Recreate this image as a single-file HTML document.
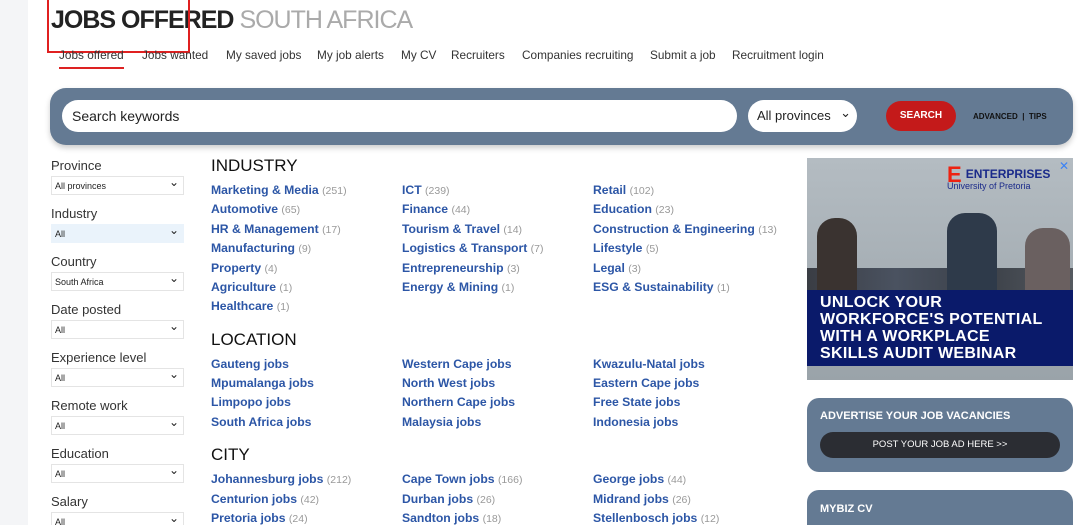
<!DOCTYPE html><html><head><style>
html,body{margin:0;width:1080px;height:525px;overflow:hidden}
body{background:#fff;font-family:"Liberation Sans",sans-serif;position:relative}
.a{position:absolute;white-space:nowrap}
.strip{left:0;top:0;width:28px;height:525px;background:#f4f5f7}
.nav{top:48px;font-size:11.8px;color:#333}
.lbl{font-size:13px;color:#333;left:51px}
.sel{left:51px;width:133px;height:19px;border:1px solid #e4e4e4;font-size:9px;color:#222;box-sizing:border-box;padding:4px 3px}
.sel:after{content:"⌄";position:absolute;right:4px;top:-2px;font-size:12px}
.h{font-size:17px;color:#111;left:211px}
.l{font-size:12.2px;font-weight:bold;color:#2c56a6}
.l span{font-weight:normal;color:#999;font-size:10.5px}
</style></head><body>
<div class="a strip"></div>
<div class="a" style="left:51px;top:6px;font-size:25px;letter-spacing:-1px"><b style="color:#222">JOBS OFFERED</b> <span style="color:#aaa">SOUTH AFRICA</span></div>
<div class="a" style="left:47px;top:0;width:139px;height:51px;border:2px solid #e02020;border-top:none"></div>
<div class="a nav" style="left:59px">Jobs offered</div>
<div class="a" style="left:59px;top:67px;width:65px;height:2px;background:#d22"></div>
<div class="a nav" style="left:142px">Jobs wanted</div>
<div class="a nav" style="left:226px">My saved jobs</div>
<div class="a nav" style="left:317px">My job alerts</div>
<div class="a nav" style="left:401px">My CV</div>
<div class="a nav" style="left:451px">Recruiters</div>
<div class="a nav" style="left:522px">Companies recruiting</div>
<div class="a nav" style="left:650px">Submit a job</div>
<div class="a nav" style="left:732px">Recruitment login</div>
<div class="a" style="left:50px;top:88px;width:1023px;height:57px;background:#647a93;border-radius:16px;box-shadow:0 3px 6px rgba(0,0,0,.2)"></div>
<div class="a" style="left:62px;top:100px;width:675px;height:32px;background:#fff;border-radius:16px;font-size:14px;color:#222;line-height:32px;padding-left:10px;box-sizing:border-box">Search keywords</div>
<div class="a" style="left:748px;top:100px;width:109px;height:32px;background:#fff;border-radius:16px;font-size:13px;color:#222;line-height:32px;padding-left:9px;box-sizing:border-box">All provinces<span style="position:absolute;right:6px;top:-3px;font-size:13px">⌄</span></div>
<div class="a" style="left:886px;top:101px;width:70px;height:30px;background:#c41a1a;border-radius:15px;color:#fff;font-size:10px;font-weight:bold;text-align:center;line-height:30px">SEARCH</div>
<div class="a" style="left:973px;top:112px;font-size:8px;font-weight:bold;color:#111">ADVANCED &nbsp;| &nbsp;TIPS</div>

<div class="a lbl" style="top:158px">Province</div><div class="a sel" style="top:176px">All provinces</div>
<div class="a lbl" style="top:206px">Industry</div><div class="a sel" style="top:224px;background:#eaf3fb;border-color:#eaf3fb">All</div>
<div class="a lbl" style="top:254px">Country</div><div class="a sel" style="top:272px">South Africa</div>
<div class="a lbl" style="top:302px">Date posted</div><div class="a sel" style="top:320px">All</div>
<div class="a lbl" style="top:350px">Experience level</div><div class="a sel" style="top:368px">All</div>
<div class="a lbl" style="top:398px">Remote work</div><div class="a sel" style="top:416px">All</div>
<div class="a lbl" style="top:446px">Education</div><div class="a sel" style="top:464px">All</div>
<div class="a lbl" style="top:494px">Salary</div><div class="a sel" style="top:512px">All</div>

<div class="a h" style="top:156px">INDUSTRY</div>
<div class="a l" style="left:211px;top:183px">Marketing &amp; Media <span>(251)</span></div>
<div class="a l" style="left:211px;top:202px">Automotive <span>(65)</span></div>
<div class="a l" style="left:211px;top:222px">HR &amp; Management <span>(17)</span></div>
<div class="a l" style="left:211px;top:241px">Manufacturing <span>(9)</span></div>
<div class="a l" style="left:211px;top:261px">Property <span>(4)</span></div>
<div class="a l" style="left:211px;top:280px">Agriculture <span>(1)</span></div>
<div class="a l" style="left:211px;top:299px">Healthcare <span>(1)</span></div>
<div class="a l" style="left:402px;top:183px">ICT <span>(239)</span></div>
<div class="a l" style="left:402px;top:202px">Finance <span>(44)</span></div>
<div class="a l" style="left:402px;top:222px">Tourism &amp; Travel <span>(14)</span></div>
<div class="a l" style="left:402px;top:241px">Logistics &amp; Transport <span>(7)</span></div>
<div class="a l" style="left:402px;top:261px">Entrepreneurship <span>(3)</span></div>
<div class="a l" style="left:402px;top:280px">Energy &amp; Mining <span>(1)</span></div>
<div class="a l" style="left:593px;top:183px">Retail <span>(102)</span></div>
<div class="a l" style="left:593px;top:202px">Education <span>(23)</span></div>
<div class="a l" style="left:593px;top:222px">Construction &amp; Engineering <span>(13)</span></div>
<div class="a l" style="left:593px;top:241px">Lifestyle <span>(5)</span></div>
<div class="a l" style="left:593px;top:261px">Legal <span>(3)</span></div>
<div class="a l" style="left:593px;top:280px">ESG &amp; Sustainability <span>(1)</span></div>

<div class="a h" style="top:330px">LOCATION</div>
<div class="a l" style="left:211px;top:357px">Gauteng jobs</div>
<div class="a l" style="left:211px;top:376px">Mpumalanga jobs</div>
<div class="a l" style="left:211px;top:395px">Limpopo jobs</div>
<div class="a l" style="left:211px;top:415px">South Africa jobs</div>
<div class="a l" style="left:402px;top:357px">Western Cape jobs</div>
<div class="a l" style="left:402px;top:376px">North West jobs</div>
<div class="a l" style="left:402px;top:395px">Northern Cape jobs</div>
<div class="a l" style="left:402px;top:415px">Malaysia jobs</div>
<div class="a l" style="left:593px;top:357px">Kwazulu-Natal jobs</div>
<div class="a l" style="left:593px;top:376px">Eastern Cape jobs</div>
<div class="a l" style="left:593px;top:395px">Free State jobs</div>
<div class="a l" style="left:593px;top:415px">Indonesia jobs</div>

<div class="a h" style="top:445px">CITY</div>
<div class="a l" style="left:211px;top:472px">Johannesburg jobs <span>(212)</span></div>
<div class="a l" style="left:211px;top:492px">Centurion jobs <span>(42)</span></div>
<div class="a l" style="left:211px;top:511px">Pretoria jobs <span>(24)</span></div>
<div class="a l" style="left:402px;top:472px">Cape Town jobs <span>(166)</span></div>
<div class="a l" style="left:402px;top:492px">Durban jobs <span>(26)</span></div>
<div class="a l" style="left:402px;top:511px">Sandton jobs <span>(18)</span></div>
<div class="a l" style="left:593px;top:472px">George jobs <span>(44)</span></div>
<div class="a l" style="left:593px;top:492px">Midrand jobs <span>(26)</span></div>
<div class="a l" style="left:593px;top:511px">Stellenbosch jobs <span>(12)</span></div>

<div class="a" style="left:807px;top:158px;width:266px;height:222px;background:linear-gradient(#b4bcc2,#9aa3a9)">
 <div class="a" style="left:0;top:110px;width:266px;height:30px;background:linear-gradient(90deg,#3a3d44,#4a5260,#3b4048,#555a60)"></div>
 <div class="a" style="left:10px;top:60px;width:40px;height:80px;background:#3a3330;border-radius:18px 18px 0 0"></div>
 <div class="a" style="left:140px;top:55px;width:50px;height:85px;background:#2e3a4a;border-radius:18px 18px 0 0"></div>
 <div class="a" style="left:218px;top:70px;width:45px;height:70px;background:#6a6060;border-radius:18px 18px 0 0"></div>
 <div class="a" style="left:140px;top:11px;font-size:12px;font-weight:bold;color:#1a2a8a;line-height:11px"><span style="color:#e21;font-size:22px;float:left;margin-right:4px">E</span>ENTERPRISES<br><span style="font-weight:normal;font-size:9px">University of Pretoria</span></div>
 <div class="a" style="left:0;top:132px;width:266px;height:76px;background:#0a1a6a"></div>
 <div class="a" style="left:13px;top:136px;font-size:16px;font-weight:900;color:#fff;line-height:17px;letter-spacing:.3px">UNLOCK YOUR<br>WORKFORCE'S POTENTIAL<br>WITH A WORKPLACE<br>SKILLS AUDIT WEBINAR</div>
 <div class="a" style="left:252px;top:1px;font-size:12px;color:#3b82f6">✕</div>
</div>
<div class="a" style="left:807px;top:398px;width:266px;height:74px;background:#647a93;border-radius:12px">
 <div class="a" style="left:13px;top:12px;font-size:11px;font-weight:bold;color:#fff">ADVERTISE YOUR JOB VACANCIES</div>
 <div class="a" style="left:13px;top:34px;width:240px;height:26px;background:#2b2d33;border-radius:13px;color:#fff;font-size:9.5px;text-align:center;line-height:26px">POST YOUR JOB AD HERE &gt;&gt;</div>
</div>
<div class="a" style="left:807px;top:490px;width:266px;height:50px;background:#647a93;border-radius:12px">
 <div class="a" style="left:13px;top:13px;font-size:11px;font-weight:bold;color:#fff">MYBIZ CV</div>
</div>
</body></html>
